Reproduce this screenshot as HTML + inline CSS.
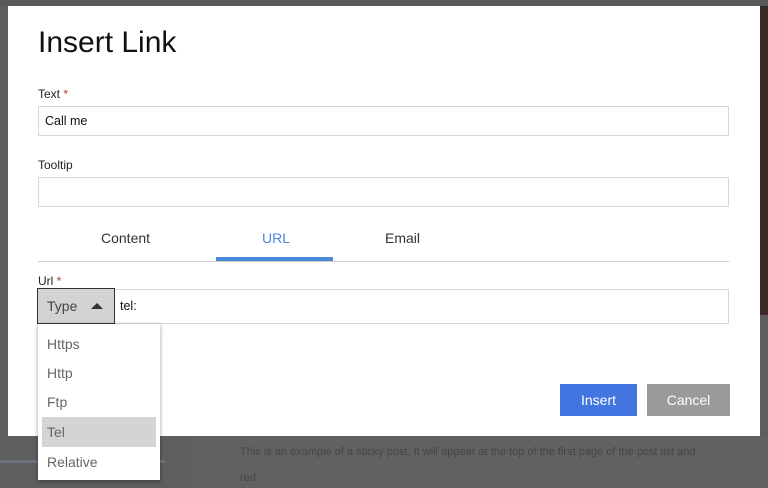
<!DOCTYPE html>
<html><head><style>
*{margin:0;padding:0;box-sizing:border-box}
body{width:768px;height:488px;overflow:hidden;background:#5e5e5e;font-family:"Liberation Sans",sans-serif;position:relative}
.a{position:absolute}
.dlg{left:8px;top:6px;width:752px;height:430px;background:#fff}
.lbl{font-size:12px;color:#222}
.lbl b{color:#b03a2e;font-weight:normal}
.inp{border:1px solid #d6d6d6;background:#fff}
.t{font-size:13px;color:#333}
</style></head><body>
<div class="a" style="left:760px;top:0;width:8px;height:315px;background:#3a2a2a"></div>
<div class="a" style="left:0;top:0;width:768px;height:6px;background:#595959"></div>
<div class="a" style="left:192px;top:436px;width:576px;height:52px;background:#616161"></div>
<div class="a" style="left:0;top:460px;width:165px;height:3px;background:#6a7080"></div>
<div class="a" style="left:240px;top:446px;font-size:11px;color:#454545;white-space:nowrap">This is an example of a sticky post. It will appear at the top of the first page of the post list and</div>
<div class="a" style="left:240px;top:472px;font-size:11px;color:#454545">red.</div>
<div class="a dlg"></div>
<div class="a" style="left:38px;top:26px;font-size:30px;color:#111">Insert Link</div>
<div class="a lbl" style="left:38px;top:87px">Text <b>*</b></div>
<div class="a inp" style="left:38px;top:106px;width:691px;height:30px"></div>
<div class="a" style="left:45px;top:114px;font-size:12.5px;color:#111">Call me</div>
<div class="a lbl" style="left:38px;top:158px">Tooltip</div>
<div class="a inp" style="left:38px;top:177px;width:691px;height:30px"></div>
<div class="a t" style="left:101px;top:230px;font-size:14px">Content</div>
<div class="a" style="left:262px;top:230px;font-size:14px;color:#4a88dc">URL</div>
<div class="a t" style="left:385px;top:230px;font-size:14px">Email</div>
<div class="a" style="left:38px;top:261px;width:691px;height:1px;background:#ccc"></div>
<div class="a" style="left:216px;top:257px;width:117px;height:4px;background:#4a88dc"></div>
<div class="a lbl" style="left:38px;top:274px">Url <b>*</b></div>
<div class="a inp" style="left:114px;top:289px;width:615px;height:35px"></div>
<div class="a" style="left:120px;top:299px;font-size:12.5px;color:#111">tel:</div>
<div class="a" style="left:37px;top:288px;width:78px;height:36px;background:#d3d3d3;border:1px solid #333"></div>
<div class="a" style="left:47px;top:298px;font-size:14px;color:#444">Type</div>
<div class="a" style="left:91px;top:303px;width:0;height:0;border-left:6px solid transparent;border-right:6px solid transparent;border-bottom:6px solid #333"></div>
<div class="a" style="left:38px;top:324px;width:122px;height:156px;background:#fff;box-shadow:0 1px 4px rgba(0,0,0,.4)"></div>
<div class="a" style="left:42px;top:417px;width:114px;height:30px;background:#d4d4d4"></div>
<div class="a" style="left:47px;top:335px;font-size:14px;color:#666;line-height:18px">Https</div>
<div class="a" style="left:47px;top:364px;font-size:14px;color:#666;line-height:18px">Http</div>
<div class="a" style="left:47px;top:393px;font-size:14px;color:#666;line-height:18px">Ftp</div>
<div class="a" style="left:47px;top:423px;font-size:14px;color:#666;line-height:18px">Tel</div>
<div class="a" style="left:47px;top:453px;font-size:14px;color:#666;line-height:18px">Relative</div>
<div class="a" style="left:560px;top:384px;width:77px;height:32px;background:#4275e0;color:#fff;font-size:14px;text-align:center;line-height:32px">Insert</div>
<div class="a" style="left:647px;top:384px;width:83px;height:32px;background:#9a9a9a;color:#fff;font-size:14px;text-align:center;line-height:32px">Cancel</div>
</body></html>
